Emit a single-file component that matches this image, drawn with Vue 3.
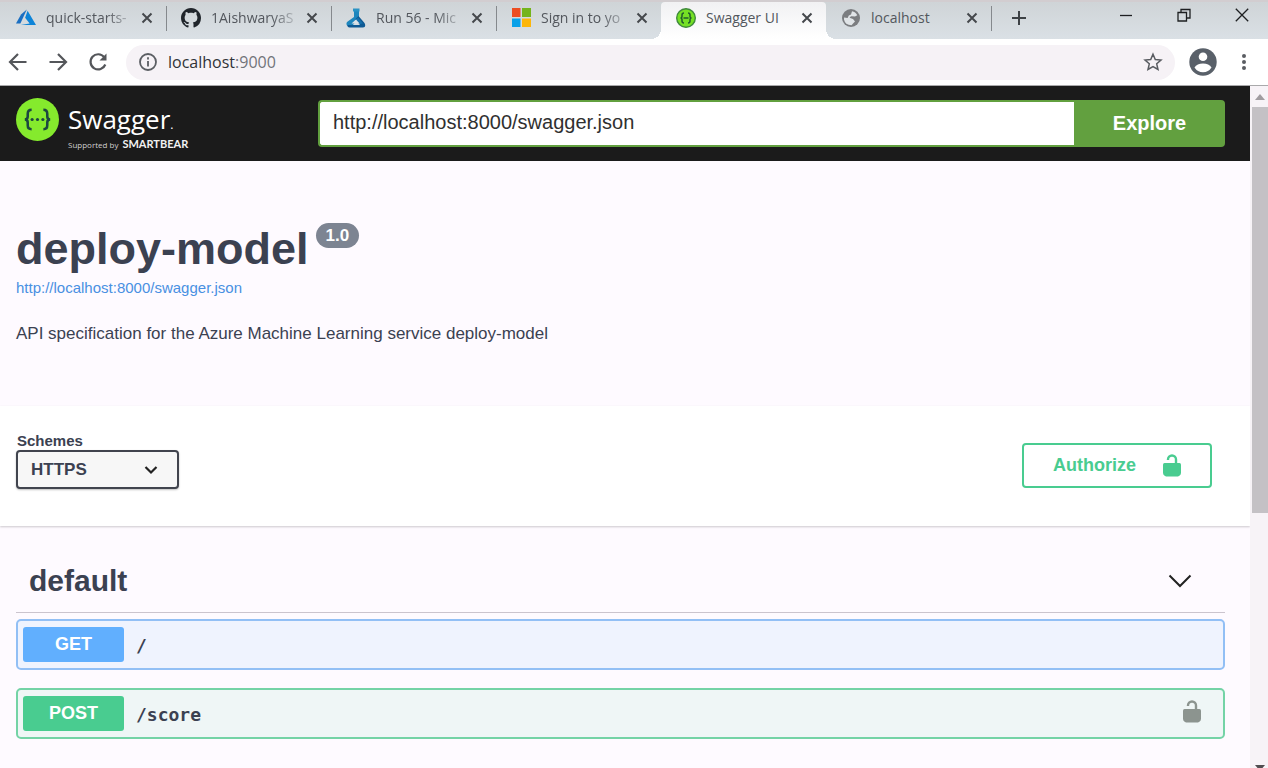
<script setup>
import { ref } from 'vue'

const tabs = [
  { icon: 'azure', title: 'quick-starts-', fade: true },
  { icon: 'github', title: '1AishwaryaS', fade: true },
  { icon: 'flask', title: 'Run 56 - Mic', fade: true },
  { icon: 'microsoft', title: 'Sign in to yo', fade: true },
  { icon: 'swagger', title: 'Swagger UI', active: true },
  { icon: 'globe', title: 'localhost' },
]

const operations = [
  { method: 'GET', path: '/', locked: false },
  { method: 'POST', path: '/score', locked: true },
]

const specUrl = ref('http://localhost:8000/swagger.json')
const scheme = ref('https')
</script>

<template>
  <div class="browser">
    <header class="tabstrip">
      <div v-for="tab in tabs" :key="tab.title" class="tab" :class="{ active: tab.active, fade: tab.fade }">
        <svg v-if="tab.icon === 'azure'" class="favicon" viewBox="0 0 20 20" aria-hidden="true">
          <path d="M10.8 1.5 5 6.6 0 15.6h4.4z" fill="#1b6fc2" />
          <path d="M11.6 2.8 9.1 9.7l4.6 5.8-9 1.6H20z" fill="#0d84d8" />
        </svg>
        <svg v-else-if="tab.icon === 'github'" class="favicon" viewBox="0 0 16 16" aria-hidden="true">
          <path fill="#20252b" d="M8 0C3.58 0 0 3.58 0 8c0 3.54 2.29 6.53 5.47 7.59.4.07.55-.17.55-.38 0-.19-.01-.82-.01-1.49-2.01.37-2.53-.49-2.69-.94-.09-.23-.48-.94-.82-1.13-.28-.15-.68-.52-.01-.53.63-.01 1.08.58 1.23.82.72 1.21 1.87.87 2.33.66.07-.52.28-.87.51-1.07-1.78-.2-3.64-.89-3.64-3.95 0-.87.31-1.59.82-2.15-.08-.2-.36-1.02.08-2.12 0 0 .67-.21 2.2.82.64-.18 1.32-.27 2-.27s1.36.09 2 .27c1.53-1.04 2.2-.82 2.2-.82.44 1.1.16 1.92.08 2.12.51.56.82 1.27.82 2.15 0 3.07-1.87 3.75-3.65 3.95.29.25.54.73.54 1.48 0 1.07-.01 1.93-.01 2.2 0 .21.15.46.55.38A8.01 8.01 0 0 0 16 8c0-4.42-3.58-8-8-8z" />
        </svg>
        <svg v-else-if="tab.icon === 'flask'" class="favicon" viewBox="0 0 20 20" aria-hidden="true">
          <path d="M8 3h5v7L6 18H2q-2.500-1-1-4l7-5z" fill="#1e86bd" />
          <path d="M7 .500h6.500V3.500H7z" fill="#2a93c4" />
          <path d="M9 11.500 12.500 8l6 7q2 4-1.500 4.500H3.500q-2.500-.5-2-2.500H14z" fill="#0f5a94" />
          <path d="m5.500 15.500 5-4.500 3.500 4.500z" fill="#dbe3e8" />
          <path d="m10 11.500 2-2 5 6-3 .5z" fill="#1771ad" />
        </svg>
        <svg v-else-if="tab.icon === 'microsoft'" class="favicon" viewBox="0 0 20 20" aria-hidden="true">
          <path d="M1 0h8.500v9H1z" fill="#ec4d22" />
          <path d="M11 0h9v9h-9z" fill="#74b41b" />
          <path d="M1 10.500h8.500V19H1z" fill="#08a0e8" />
          <path d="M11 10.500h9V19h-9z" fill="#fcb60a" />
        </svg>
        <svg v-else-if="tab.icon === 'swagger'" class="favicon" viewBox="0 0 20 20" aria-hidden="true">
          <circle cx="10" cy="10" r="9.300" fill="#75e024" stroke="#3f8a3c" stroke-width="1.400" />
          <path d="M8 5Q6 5 6 7v1.500Q6 10 4.500 10 6 10 6 11.500V13q0 2 2 2M12 5q2 0 2 2v1.500q0 1.500 1.500 1.500Q14 10 14 11.500V13q0 2-2 2M7.500 10h5" fill="none" stroke="#215c2c" stroke-width="1.500" />
        </svg>
        <svg v-else class="favicon" viewBox="0 0 20 20" aria-hidden="true">
          <circle cx="10" cy="10" r="9" fill="#7b7d80" />
          <path d="M11 3.200q3.500.5 5.300 4l-2.300 1.300q-2.500-.5-4-.3l-1.500 1.600 3.500 1.200 2 2.500-1.500 1.500-2 2.200Q4 17 3 11.500l.1-2 3.500.5 1.200-2.500 2.200-1z" fill="#e0e4e7" />
        </svg>
        <span class="tab-title">{{ tab.title }}</span>
        <button class="tab-close" type="button" :aria-label="`Close ${tab.title}`">
          <svg viewBox="0 0 12 12" aria-hidden="true"><path d="m1.500 1.500 9 9m0-9-9 9" /></svg>
        </button>
      </div>
      <button class="new-tab" type="button" aria-label="New tab">
        <svg viewBox="0 0 16 16" aria-hidden="true"><path d="M8 1v14M1 8h14" /></svg>
      </button>
      <div class="window-controls">
        <button type="button" aria-label="Minimize">
          <svg viewBox="0 0 14 14" aria-hidden="true"><path d="M1 7.500h12" /></svg>
        </button>
        <button type="button" aria-label="Restore">
          <svg viewBox="0 0 14 14" aria-hidden="true"><path d="M1 4.500h8.500V13H1zM4 4.500V1.500h9V10H9.500" /></svg>
        </button>
        <button type="button" aria-label="Close window">
          <svg viewBox="0 0 14 14" aria-hidden="true"><path d="m.8.800 12.400 12.400m0-12.400L.8 13.200" /></svg>
        </button>
      </div>
    </header>

    <nav class="toolbar" aria-label="Browser">
      <button class="nav-btn" type="button" aria-label="Back">
        <svg viewBox="0 0 20 20" aria-hidden="true"><path d="M18.500 10H2m8-8-8 8 8 8" /></svg>
      </button>
      <button class="nav-btn" type="button" aria-label="Forward">
        <svg viewBox="0 0 20 20" aria-hidden="true"><path d="M1.500 10H18m-8-8 8 8-8 8" /></svg>
      </button>
      <button class="nav-btn" type="button" aria-label="Reload">
        <svg viewBox="0 0 20 20" aria-hidden="true">
          <path d="M16.200 5.200A7.600 7.600 0 1 0 17.300 12.500" />
          <path d="M18.500 1.500v7h-7z" fill="#54565a" stroke="none" />
        </svg>
      </button>
      <div class="omnibox">
        <svg class="info-icon" viewBox="0 0 20 20" aria-hidden="true">
          <circle cx="10" cy="10" r="8" /><path d="M10 9v5.500M10 5.200v2.200" />
        </svg>
        <span class="address">localhost<span class="port">:9000</span></span>
        <button class="star" type="button" aria-label="Bookmark this page">
          <svg viewBox="0 0 20 20" aria-hidden="true"><path d="m10 2.200 2.300 5.300 5.700.5-4.300 3.800 1.300 5.700-5-3-5 3 1.300-5.700L2 8l5.700-.5z" /></svg>
        </button>
      </div>
      <button class="profile" type="button" aria-label="Profile">
        <svg viewBox="0 0 28 28" aria-hidden="true">
          <circle cx="14" cy="14" r="13.700" fill="#596069" />
          <circle cx="14" cy="8.700" r="4.300" fill="#fff" />
          <path d="M5.500 19.500q2.500-4 8.500-4t8.500 4q-3 4.700-8.500 4.700t-8.500-4.700z" fill="#fff" />
        </svg>
      </button>
      <button class="menu" type="button" aria-label="Menu">
        <svg viewBox="0 0 4 18" aria-hidden="true"><circle cx="2" cy="3" r="2" /><circle cx="2" cy="9" r="2" /><circle cx="2" cy="15" r="2" /></svg>
      </button>
    </nav>

    <div class="viewport">
      <main class="page">
        <header class="topbar">
          <a class="brand" href="#" aria-label="Swagger">
            <svg class="brand-mark" viewBox="0 0 44 44" aria-hidden="true">
              <circle cx="22" cy="22" r="22" fill="#85ea2d" />
              <path d="M16 12q-4 0-4 4v3q0 3-3 3 3 0 3 3v3q0 4 4 4M28 12q4 0 4 4v3q0 3 3 3-3 0-3 3v3q0 4-4 4" fill="none" stroke="#1c4740" stroke-width="2.600" />
              <circle cx="16.500" cy="22" r="1.600" fill="#1c4740" /><circle cx="22" cy="22" r="1.600" fill="#1c4740" /><circle cx="27.500" cy="22" r="1.600" fill="#1c4740" />
            </svg>
            <span class="brand-text">
              <span class="brand-name">Swagger<span class="mark">.</span></span>
              <span class="brand-by">Supported by <strong>SMARTBEAR</strong></span>
            </span>
          </a>
          <form class="spec-form" @submit.prevent>
            <input v-model="specUrl" type="text" aria-label="Specification URL" />
            <button type="submit">Explore</button>
          </form>
        </header>

        <section class="info">
          <h1>deploy-model<span class="version">1.0</span></h1>
          <a class="spec-link" href="#">http://localhost:8000/swagger.json</a>
          <p>API specification for the Azure Machine Learning service deploy-model</p>
        </section>

        <section class="schemes">
          <div class="scheme-field">
            <label for="scheme">Schemes</label>
            <div class="select-wrap">
              <select id="scheme" v-model="scheme"><option value="https">HTTPS</option></select>
              <svg viewBox="0 0 14 10" aria-hidden="true"><path d="m1.500 2 5.500 5.500L12.500 2" /></svg>
            </div>
          </div>
          <button class="authorize" type="button">
            Authorize
            <svg class="lock" viewBox="0 0 20 24" aria-hidden="true">
              <path d="M6 6V5.500a4 4 0 0 1 8 0V10" fill="none" stroke="currentColor" stroke-width="2.400" />
              <path d="M1 10.500Q1 9 2.500 9h15Q19 9 19 10.500v8.500q0 2-2 3-1 .5-2.500.5h-9Q4 22.500 3 22q-2-1-2-3z" fill="currentColor" />
            </svg>
          </button>
        </section>

        <section class="operations">
          <h2>
            default
            <button type="button" aria-label="Collapse default">
              <svg viewBox="0 0 24 14" aria-hidden="true"><path d="m1.500 1.500 10.500 10.500L22.500 1.500" /></svg>
            </button>
          </h2>
          <button v-for="op in operations" :key="op.path" type="button" class="operation" :class="op.method.toLowerCase()">
            <span class="method">{{ op.method }}</span>
            <span class="path">{{ op.path }}</span>
            <svg v-if="op.locked" class="lock" viewBox="0 0 20 24" aria-hidden="true">
              <path d="M6 6V5.500a4 4 0 0 1 8 0V10" fill="none" stroke="currentColor" stroke-width="2.400" />
              <path d="M1 10.500Q1 9 2.500 9h15Q19 9 19 10.500v8.500q0 2-2 3-1 .5-2.500.5h-9Q4 22.500 3 22q-2-1-2-3z" fill="currentColor" />
            </svg>
          </button>
        </section>
      </main>
      <div class="scrollbar" aria-hidden="true">
        <svg class="up" viewBox="0 0 10 6"><path d="M0 6 5 0l5 6z" /></svg>
        <div class="thumb"></div>
        <div class="rest"></div>
        <svg class="down" viewBox="0 0 10 6"><path d="M0 0h10L5 6z" /></svg>
      </div>
    </div>
  </div>
</template>

<style>
body {
  margin: 0;
}
</style>

<style scoped>
.browser,
.browser * {
  box-sizing: border-box;
}

.browser {
  display: flex;
  flex-direction: column;
  height: 100vh;
  overflow: hidden;
  background: #fff;
  font-family: "Liberation Sans", Arial, sans-serif;
  color: #3b4151;
}

button {
  padding: 0;
  border: 0;
  background: none;
  color: inherit;
  font: inherit;
}

svg {
  display: block;
  flex: none;
}

/* Tab strip */
.tabstrip {
  display: flex;
  flex: none;
  height: 39px;
  padding-left: 1px;
  border-top: 2px solid #d2cdd0;
  background: linear-gradient(#cfd4d7, #dae0e5);
}

.tab {
  display: flex;
  align-items: center;
  width: 165px;
  padding: 0 7px 5px 15px;
  position: relative;
  font: 14px/20px "Open Sans", "Noto Sans", sans-serif;
  color: #53575d;
}

.tab:not(.active)::after {
  content: "";
  position: absolute;
  right: -1px;
  top: 4px;
  width: 1px;
  height: 25px;
  background: #85898d;
}

.tab.active {
  background: linear-gradient(#f1f1f3, #fff);
  border-radius: 4px 4px 0 0;
}

.tab:has(+ .active)::after {
  display: none;
}

.tab.active::before,
.tab.active::after {
  content: "";
  position: absolute;
  bottom: 0;
  width: 10px;
  height: 10px;
}

.tab.active::before {
  right: 100%;
  background: radial-gradient(circle at 0 0, transparent 10px, #fff 10px);
}

.tab.active::after {
  left: 100%;
  background: radial-gradient(circle at 100% 0, transparent 10px, #fff 10px);
}

.favicon {
  width: 20px;
  height: 20px;
  margin-right: 10px;
}

.tab-title {
  flex: 1;
  white-space: nowrap;
}

.tab.fade .tab-title {
  mask-image: linear-gradient(to right, #000 60px, rgba(0, 0, 0, 0.3) 82px);
}

.tab-close {
  display: grid;
  place-items: center;
  width: 24px;
  height: 24px;
}

.tab-close svg {
  width: 12px;
  height: 12px;
  fill: none;
  stroke: #45484c;
  stroke-width: 2;
}

.new-tab {
  width: 56px;
  padding: 0 0 5px 20px;
}

.new-tab svg {
  width: 16px;
  height: 16px;
  fill: none;
  stroke: #3d4145;
  stroke-width: 2;
}

.window-controls {
  display: flex;
  gap: 44px;
  margin-left: auto;
  padding-right: 19px;
  height: 26px;
}

.window-controls svg {
  width: 14px;
  height: 14px;
  fill: none;
  stroke: #1d1f21;
  stroke-width: 1.3;
}

/* Toolbar */
.toolbar {
  display: flex;
  flex: none;
  align-items: center;
  height: 47px;
  padding: 0 22px 0 8px;
  border-bottom: 1px solid #a9a9ab;
  background: #fff;
}

.nav-btn {
  margin-right: 20px;
}

.nav-btn svg {
  width: 20px;
  height: 20px;
  fill: none;
  stroke: #54565a;
  stroke-width: 2.2;
}

.nav-btn:nth-of-type(3) {
  margin-right: 18px;
}

.omnibox {
  display: flex;
  flex: 1;
  align-items: center;
  height: 35px;
  margin-right: 14px;
  padding: 0 12px;
  border-radius: 18px;
  background: #f6f2f6;
}

.info-icon {
  width: 20px;
  height: 20px;
  margin-right: 10px;
  fill: none;
  stroke: #5b5e63;
  stroke-width: 1.8;
}

.address {
  flex: 1;
  font: 16px/22px "Open Sans", "Noto Sans", sans-serif;
  color: #303338;
}

.port {
  color: #71747a;
}

.star svg {
  width: 20px;
  height: 20px;
  fill: none;
  stroke: #595c61;
  stroke-width: 1.5;
}

.profile svg {
  width: 28px;
  height: 28px;
}

.menu {
  margin-left: 25px;
}

.menu svg {
  width: 4px;
  height: 18px;
  fill: #5a5d62;
}

/* Page */
.viewport {
  display: flex;
  flex: 1;
  min-height: 0;
}

.page {
  flex: 1;
  min-width: 0;
  overflow: hidden;
  background: #fefaff;
}

.topbar {
  display: flex;
  align-items: center;
  height: 75px;
  padding: 0 25px 0 16px;
  background: #1b1b1b;
}

.brand {
  display: flex;
  align-items: flex-start;
  width: 302px;
  height: 51px;
  gap: 8px;
  color: #fff;
  text-decoration: none;
}

.brand-mark {
  width: 43px;
  height: 43px;
}

.brand-text {
  display: flex;
  flex-direction: column;
  padding-top: 8px;
  white-space: nowrap;
}

.brand-name {
  padding-left: 1px;
  font: 26px/26px "Open Sans", "Noto Sans", sans-serif;
}

.mark {
  font-size: 12px;
}

.brand-by {
  display: flex;
  align-items: baseline;
  gap: 4px;
  padding-left: 1px;
  font: 8px/12px "Open Sans", "Noto Sans", sans-serif;
  color: #d0d0d0;
}

.brand-by strong {
  font: bold 11px/12px Lato, sans-serif;
  color: #f2f2f2;
}

.spec-form {
  display: flex;
  flex: 1;
  height: 48px;
  padding-bottom: 1px;
}

.spec-form input {
  flex: 1;
  min-width: 0;
  padding: 0 13px 2px;
  border: 2px solid #62a03f;
  border-right: 0;
  border-radius: 4px 0 0 4px;
  background: #fff;
  color: #303030;
  font: 20px/24px "Liberation Sans", Arial, sans-serif;
}

.spec-form button {
  width: 151px;
  border-radius: 0 4px 4px 0;
  background: #62a03f;
  color: #fff;
  font-size: 20px;
  font-weight: bold;
}

.info {
  height: 245px;
  padding: 61px 16px 0;
}

.info h1 {
  display: flex;
  align-items: flex-start;
  margin: 0;
  font-size: 45px;
  line-height: 54px;
}

.version {
  margin: 1px 0 0 7px;
  padding: 0 10px;
  border-radius: 13px;
  background: #7d8492;
  color: #fff;
  font-size: 17px;
  line-height: 25px;
}

.spec-link {
  display: block;
  margin-top: 2px;
  color: #4990e2;
  font-size: 15px;
  line-height: 20px;
  text-decoration: none;
}

.info p {
  margin: 25px 0 0;
  font-size: 17px;
  line-height: 22px;
}

.schemes {
  display: flex;
  align-items: flex-start;
  justify-content: space-between;
  height: 120px;
  padding: 26px 38px 0 16px;
  background: #fff;
  box-shadow: 0 1px 2px rgba(0, 0, 0, 0.2);
}

.scheme-field label {
  display: block;
  padding-left: 1px;
  font-size: 15px;
  font-weight: bold;
  line-height: 18px;
}

.select-wrap {
  position: relative;
  width: 163px;
}

.select-wrap select {
  width: 100%;
  height: 39px;
  padding: 0 13px;
  border: 2px solid #41444e;
  border-radius: 4px;
  background: #f7f7f7;
  box-shadow: 0 1px 2px rgba(0, 0, 0, 0.25);
  color: #3b4151;
  font: bold 17px/22px "Liberation Sans", Arial, sans-serif;
  appearance: none;
}

.select-wrap svg {
  position: absolute;
  right: 21px;
  top: 15px;
  width: 14px;
  height: 10px;
  fill: none;
  stroke: #222;
  stroke-width: 2.2;
  pointer-events: none;
}

.authorize {
  display: flex;
  align-items: center;
  justify-content: space-between;
  width: 190px;
  height: 45px;
  margin-top: 11px;
  padding: 0 28px 0 29px;
  border: 2px solid #49cc90;
  border-radius: 4px;
  color: #49cc90;
  font-size: 18px;
  font-weight: bold;
}

.lock {
  width: 20px;
  height: 24px;
}

.operations {
  padding: 24px 25px 0 16px;
}

.operations h2 {
  display: flex;
  align-items: center;
  justify-content: space-between;
  height: 63px;
  margin: 0 0 6px;
  padding: 0 33px 0 13px;
  border-bottom: 1px solid #cbc4ce;
  font-size: 30px;
  line-height: 36px;
}

.operations h2 svg {
  width: 24px;
  height: 14px;
  fill: none;
  stroke: #222;
  stroke-width: 2;
}

.operation {
  display: flex;
  align-items: center;
  width: 100%;
  height: 51px;
  margin-bottom: 18px;
  padding: 0 21px 0 5px;
  border: 2px solid;
  border-radius: 5px;
}

.operation.get {
  border-color: #92bff5;
  background: #eff3fe;
}

.operation.post {
  border-color: #74d3a6;
  background: #eff6f6;
}

.method {
  width: 101px;
  border-radius: 3px;
  color: #fff;
  font-size: 18px;
  font-weight: bold;
  line-height: 35px;
  text-align: center;
}

.get .method {
  background: #61affe;
}

.post .method {
  background: #49cc90;
}

.path {
  flex: 1;
  padding: 2px 0 0 12px;
  font: bold 18px/24px "DejaVu Sans Mono", monospace;
  text-align: left;
}

.operation .lock {
  margin-bottom: 4px;
  color: #8c948f;
}

/* Scrollbar */
.scrollbar {
  display: flex;
  flex: none;
  flex-direction: column;
  width: 18px;
  padding: 8px 0 0 2px;
  background: #f7f3f7;
}

.scrollbar svg {
  width: 10px;
  height: 6px;
  margin-left: 3px;
}

.scrollbar .up {
  margin-bottom: 7px;
  fill: #a09ca0;
}

.thumb {
  flex: 406;
  background: #c4c1c5;
}

.rest {
  flex: 252;
}

.scrollbar .down {
  margin-bottom: -3px;
  fill: #504d50;
}
</style>
